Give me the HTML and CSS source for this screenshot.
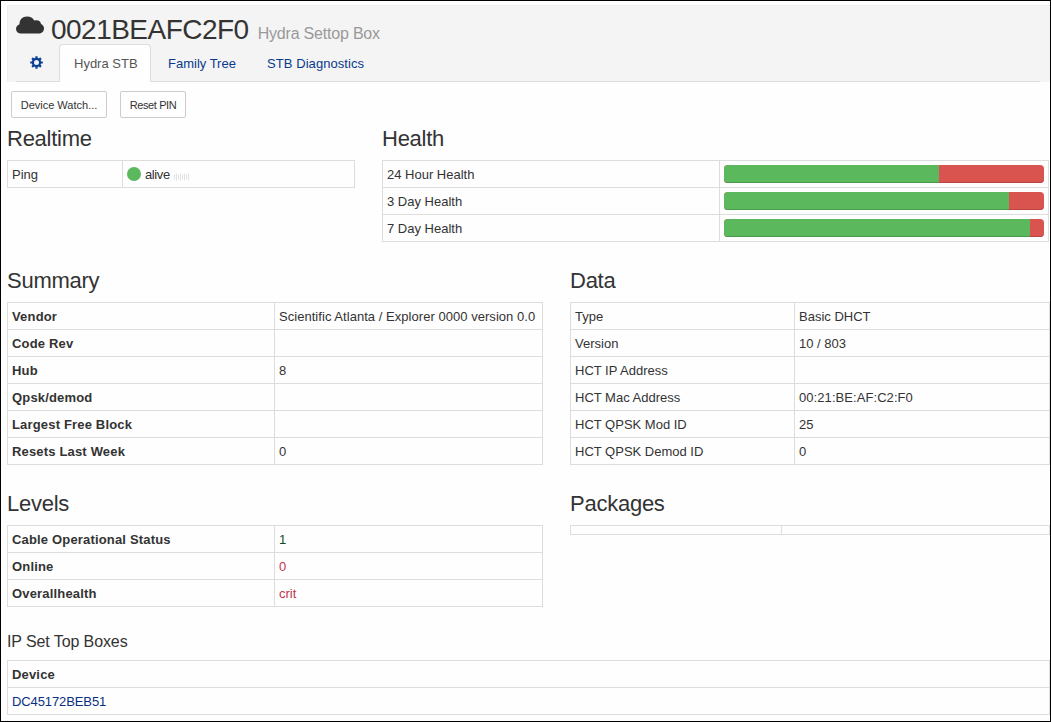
FILE: index.html
```html
<!DOCTYPE html>
<html lang="en">
<head>
<meta charset="utf-8">
<title>0021BEAFC2F0 - Hydra Settop Box</title>
<link rel="stylesheet" href="styles.css">
</head>
<body>
<main class="page">
  <header class="device-header">
    <div class="title-row">
      <svg class="cloud" viewBox="0 0 28 18" width="28" height="18"><path d="M5 17.500C2 17.500 0 15.500 0 13C0 10.500 1.500 9 3.500 8.300C3.500 3.500 6.500 .500 11 .500C14.500 .500 17 2 18.200 4.500C22 3.500 24.800 5 25 8C27 9 28 10.500 28 12.500C28 15.500 25.500 17.500 22.500 17.500Z"/></svg>
      <h1>0021BEAFC2F0</h1><span class="kind">Hydra Settop Box</span>
    </div>
    <nav class="tabs">
      <a class="tab gear-tab"><svg class="gear" viewBox="-6.500 -6.500 13 13" width="13" height="13"><circle r="3.600" class="gear-ring"/><path class="gear-teeth" d="M0-6.300V-4M0 4V6.300M-6.300 0H-4M4 0H6.300M-4.400-4.400L-2.900-2.900M2.900 2.900L4.400 4.400M-4.400 4.400L-2.900 2.900M2.900-2.900L4.400-4.400"/></svg></a>
      <a class="tab active"><span>Hydra STB</span></a>
      <a class="tab family"><span>Family Tree</span></a>
      <a class="tab diag"><span>STB Diagnostics</span></a>
    </nav>
  </header>
  <div class="actions"><button class="watch">Device Watch...</button><button class="pin">Reset PIN</button></div>

  <div class="row status-row">
    <section class="realtime">
      <h2>Realtime</h2>
      <table><tr><td class="c-ping">Ping</td><td><span class="ping"><i class="dot"></i><span class="alive">alive</span><svg class="signal" width="15" height="8" viewBox="0 0 15 8"><path d="M.5 1.500V6.500M2.500 .500V7.500M4.500 1.500V6.500M6.500 .500V7.500M8.500 1.500V6.500M10.500 .500V7.500M12.500 1.500V6.500M14.500 .500V7.500"/></svg></span></td></tr></table>
    </section>
    <section class="health">
      <h2>Health</h2>
      <table>
        <tr><td class="c-health">24 Hour Health</td><td class="bar-cell"><div class="bar"><div class="up" style="width:67.2%"></div></div></td></tr>
        <tr><td>3 Day Health</td><td class="bar-cell"><div class="bar"><div class="up" style="width:89.1%"></div></div></td></tr>
        <tr><td>7 Day Health</td><td class="bar-cell"><div class="bar"><div class="up" style="width:95.7%"></div></div></td></tr>
      </table>
    </section>
  </div>

  <div class="row summary-row">
    <section class="summary">
      <h2>Summary</h2>
      <table>
        <tr><th class="c-sum">Vendor</th><td><span class="vendor">Scientific Atlanta / Explorer 0000 version 0.0</span></td></tr>
        <tr><th>Code Rev</th><td></td></tr>
        <tr><th>Hub</th><td>8</td></tr>
        <tr><th>Qpsk/demod</th><td></td></tr>
        <tr><th>Largest Free Block</th><td></td></tr>
        <tr><th>Resets Last Week</th><td>0</td></tr>
      </table>
    </section>
    <section class="data">
      <h2>Data</h2>
      <table>
        <tr><td class="c-data">Type</td><td>Basic DHCT</td></tr>
        <tr><td>Version</td><td>10 / 803</td></tr>
        <tr><td>HCT IP Address</td><td></td></tr>
        <tr><td>HCT Mac Address</td><td class="mac">00:21:BE:AF:C2:F0</td></tr>
        <tr><td>HCT QPSK Mod ID</td><td>25</td></tr>
        <tr><td>HCT QPSK Demod ID</td><td>0</td></tr>
      </table>
    </section>
  </div>

  <div class="row levels-row">
    <section class="summary">
      <h2>Levels</h2>
      <table>
        <tr><th class="c-sum">Cable Operational Status</th><td class="ok">1</td></tr>
        <tr><th>Online</th><td class="crit">0</td></tr>
        <tr><th>Overallhealth</th><td class="crit">crit</td></tr>
      </table>
    </section>
    <section class="data">
      <h2>Packages</h2>
      <table class="empty"><tr><td class="c-pack"></td><td></td></tr></table>
    </section>
  </div>

  <section class="boxes">
    <h3>IP Set Top Boxes</h3>
    <table>
      <tr><th>Device</th></tr>
      <tr><td><a class="link">DC45172BEB51</a></td></tr>
    </table>
  </section>
</main>
</body>
</html>
```
FILE: styles.css
```css
* { box-sizing: border-box; }
body { margin: 0; background: #fefefe; color: #333; font: 13px/18px "Liberation Sans", Arial, sans-serif; }
.page { width: 1051px; height: 722px; border: 1px solid #000; padding: 4px 0 0 6px; overflow: hidden; }
h1, h2, h3 { margin: 0; font-weight: 400; }

.device-header { height: 77px; background: #f4f4f4; border: 1px solid #eee; border-width: 1px 0 0 1px; border-radius: 2px 0 0 0; padding-left: 8px; }
.title-row { display: flex; align-items: baseline; height: 38px; }
.cloud { fill: #333; align-self: flex-start; margin-top: 10px; margin-right: 7px; }
h1 { font-size: 28px; line-height: 48px; letter-spacing: -.52px; }
.kind { color: #999; font-size: 16px; letter-spacing: -.2px; margin-left: 9px; }
.tabs { display: flex; height: 38px; border-bottom: 1px solid #ddd; margin-right: 10px; }
.tab { height: 38px; padding: 10px 14px 0; color: #0a3a8c; border: 1px solid transparent; border-bottom: 0; margin-right: 2px; white-space: nowrap; }
.tab.active { width: 92px; padding-left: 14px; background: #fefefe; color: #555; border-color: #ddd; border-radius: 4px 4px 0 0; }
.tab.family { width: 97px; }
.tab.diag { letter-spacing: .07px; }
.tab.gear-tab { width: 41px; padding-left: 13px; }
.gear { display: block; margin-top: 1px; }
.gear-ring { fill: none; stroke: #0a3f93; stroke-width: 2.2; }
.gear-teeth { stroke: #0a3f93; stroke-width: 2.2; }

.actions { display: flex; gap: 13px; padding: 9px 0 0 4px; height: 43px; }
button { height: 27px; border: 1px solid #ccc; border-radius: 2px; background: #fefefe; color: #333; padding: 1px 0 0; font: 11px/15px "Liberation Sans", Arial, sans-serif; }
.watch { width: 96px; }
.pin { width: 66px; letter-spacing: -.4px; }

.row { display: flex; }
.status-row { height: 142px; }
.summary-row { height: 223px; }
.levels-row { height: 135px; }
.realtime { width: 348px; margin-right: 27px; }
.health { width: 667px; }
.summary { width: 536px; margin-right: 27px; }
.data { width: 480px; }
h2 { font-size: 22px; line-height: 28px; height: 35px; letter-spacing: -.25px; white-space: nowrap; }
h3 { font-size: 16px; line-height: 24px; height: 30px; letter-spacing: -.1px; white-space: nowrap; }

table { width: 100%; border-collapse: collapse; table-layout: fixed; }
th, td { height: 27px; border: 1px solid #ddd; padding: 5px 4px 3px; text-align: left; white-space: nowrap; line-height: 18px; }
th { letter-spacing: .17px; }
.bar-cell { padding: 4px; }
.c-ping { width: 115px; }
.c-health { width: 337px; }
.c-sum { width: 267px; }
.c-data { width: 224px; }
.c-pack { width: 211px; }
.empty td { height: 9px; padding: 4px; }
.vendor { letter-spacing: .04px; }
.mac { letter-spacing: .07px; }
.ping { display: flex; align-items: center; }
.dot { width: 14px; height: 14px; border-radius: 50%; background: #5cb85c; margin: -3px 4px 0 0; }
.alive { letter-spacing: -.4px; }
.signal { margin: 3px 0 0 4px; stroke: #e2e2e2; }
.bar { height: 18px; border-radius: 4px; overflow: hidden; background: #d9534f; box-shadow: inset 0 -1px #b94440; }
.up { height: 18px; background: #5cb85c; box-shadow: inset 0 -1px #4a9b4b; }
.ok { color: #0f4a1c; }
.crit { color: #bd364f; }
.link { color: #0a2f80; letter-spacing: -.1px; }
.boxes { padding-top: 5px; }
```
